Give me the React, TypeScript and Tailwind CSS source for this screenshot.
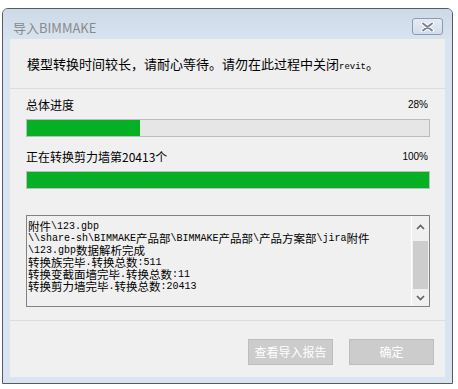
import React from "react";

const CJK = /[\u3000-\u303f\u4e00-\u9fff\uff00-\uffef]/;

// splits a string into CJK and latin runs so each can get its own font size
function Mixed({ text, cjk, latin }: { text: string; cjk: string; latin: string }) {
  const parts = text.split(/([\u3000-\u303f\u4e00-\u9fff\uff00-\uffef]+)/).filter(Boolean);
  return (
    <>
      {parts.map((p, i) => (
        <span key={i} className={CJK.test(p) ? cjk : latin}>
          {p}
        </span>
      ))}
    </>
  );
}

const logLines = [
  "附件\\123.gbp",
  "\\\\share-sh\\BIMMAKE产品部\\BIMMAKE产品部\\产品方案部\\jira附件",
  "\\123.gbp数据解析完成",
  "转换族完毕.转换总数:511",
  "转换变截面墙完毕.转换总数:11",
  "转换剪力墙完毕.转换总数:20413",
];

function Bar({ label, value }: { label: string; value: number }) {
  return (
    <div className="flex flex-col">
      <div className="flex h-[16px] items-center justify-between pr-[2px]">
        <span className="font-['Noto_Sans_CJK_SC',sans-serif] text-[12px] leading-[16px] text-black">{label}</span>
        <span className="font-['Liberation_Sans',sans-serif] text-[10px] leading-[16px] text-black">{value}%</span>
      </div>
      <div className="mt-[6px] h-[18px] border border-[#bcbcbc] bg-[#e6e6e6]">
        <div className="h-full bg-[#06b025]" style={{ width: `${value}%` }} />
      </div>
    </div>
  );
}

function Chevron({ up }: { up?: boolean }) {
  return (
    <svg width="9" height="6" viewBox="0 0 9 6">
      <polyline
        points={up ? "1,5 4.5,1.5 8,5" : "1,1 4.5,4.5 8,1"}
        fill="none"
        stroke="#606060"
        strokeWidth="1.6"
      />
    </svg>
  );
}

export default function App() {
  return (
    <div className="h-[389px] w-[458px] bg-white pl-[2px] pt-[8px]">
      <div className="flex h-[376px] w-[451px] flex-col rounded-t-[6px] border border-[#5a5a5a] bg-[#d8e4f2]">
        {/* title bar */}
        <div className="flex h-[30px] items-start justify-between rounded-t-[5px] bg-gradient-to-b from-[#cdd9e8] to-[#d8e3f0]">
          <span className="pl-[10px] pt-[11px] font-['Noto_Sans_CJK_SC',sans-serif] text-[13px] leading-[16px] text-[#8a8a8a]">
            导入BIMMAKE
          </span>
          <div className="mr-[9px] mt-[9px] flex h-[17px] w-[31px] items-center justify-center rounded-[3px] border border-[#8d9bb0] bg-gradient-to-b from-[#e4ebf4] to-[#d3dde9]">
            <svg width="13" height="10" viewBox="0 0 13 10">
              <path d="M2 1.5 L11 8.5 M11 1.5 L2 8.5" stroke="#ffffff" strokeWidth="4" strokeLinecap="round" />
              <path d="M2 1.5 L11 8.5 M11 1.5 L2 8.5" stroke="#7b8392" strokeWidth="2" strokeLinecap="round" />
            </svg>
          </div>
        </div>

        {/* client area */}
        <div className="mx-[7px] flex h-[338px] flex-col bg-[#f0f0f0]">
          <div className="flex h-[50px] items-center border-b border-[#dcdcdc] bg-[#efefef] pl-[17px] pt-[3px]">
            <span className="leading-[16px] text-black">
              <Mixed
                text="模型转换时间较长，请耐心等待。请勿在此过程中关闭revit。"
                cjk="font-['Noto_Sans_CJK_SC',sans-serif] text-[13px]"
                latin="font-['Liberation_Mono',monospace] text-[9px]"
              />
            </span>
          </div>

          <div className="flex h-[232px] flex-col border-b border-[#dcdcdc] pl-[16px] pr-[15px] pt-[8px]">
            <Bar label="总体进度" value={28} />
            <div className="mt-[12px]">
              <Bar label="正在转换剪力墙第20413个" value={100} />
            </div>

            {/* log box */}
            <div className="mt-[26px] flex h-[92px] border border-[#828282] bg-[#f0f0f0]">
              <div className="flex-1 overflow-hidden pl-[1px] pt-[4px] leading-[12px] text-black">
                {logLines.map((l, i) => (
                  <div key={i} className="h-[12px] whitespace-pre leading-[12px]">
                    <Mixed
                      text={l}
                      cjk="inline-block h-[12px] align-top font-['Noto_Sans_CJK_SC',sans-serif] text-[11.5px] leading-[12px]"
                      latin="inline-block h-[12px] align-top font-['Liberation_Mono',monospace] text-[10px] leading-[13px]"
                    />
                  </div>
                ))}
              </div>
              <div className="flex w-[18px] flex-col border-l border-white">
                <div className="flex h-[20px] items-center justify-center pt-[2px]">
                  <Chevron up />
                </div>
                <div className="h-[5px]" />
                <div className="mx-[1px] h-[48px] bg-[#cdcdcd]" />
                <div className="flex h-[17px] items-center justify-center">
                  <Chevron />
                </div>
              </div>
            </div>
          </div>

          <div className="flex flex-1 items-start justify-end gap-[16px] pr-[11px] pt-[18px]">
            <div className="flex h-[26px] w-[85px] items-center justify-center border border-[#bdbdbd] bg-[#cccccc] font-['Noto_Sans_CJK_SC',sans-serif] text-[12px] text-white">
              查看导入报告
            </div>
            <div className="flex h-[26px] w-[85px] items-center justify-center border border-[#bdbdbd] bg-[#cccccc] font-['Noto_Sans_CJK_SC',sans-serif] text-[12px] text-white">
              确定
            </div>
          </div>
        </div>
      </div>
    </div>
  );
}
